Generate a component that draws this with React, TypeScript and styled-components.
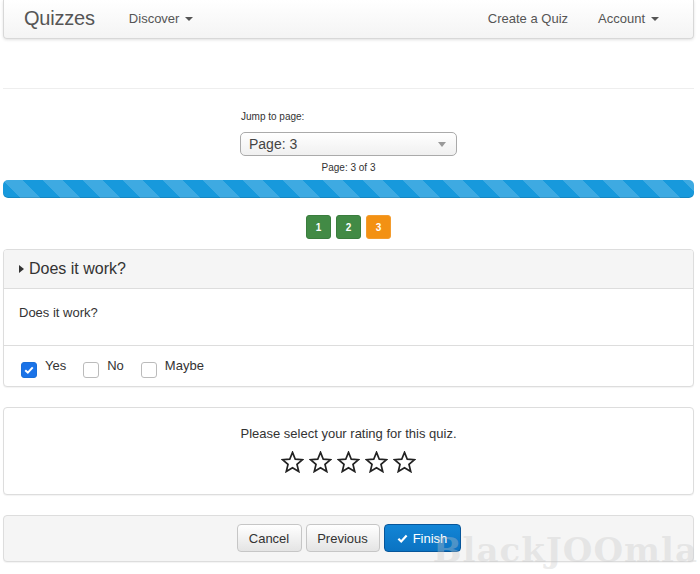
import React from 'react';
import styled, { createGlobalStyle, css } from 'styled-components';

const GlobalStyle = createGlobalStyle`
    html, body {
        margin: 0;
        padding: 0;
        background: #fff;
        font-family: "Liberation Sans", Arial, sans-serif;
        color: #333;
    }
`;

const Page = styled.div`
    position: relative;
    width: 700px;
    height: 574px;
    overflow: hidden;
    padding: 0 6px 0 3px;
    box-sizing: border-box;
`;

const Navbar = styled.nav`
    height: 39px;
    display: flex;
    align-items: center;
    background: linear-gradient(to bottom, #fff 0%, #f4f4f4 100%);
    border: 1px solid #d8d8d8;
    border-top: none;
    border-radius: 0 0 4px 4px;
    box-shadow: 0 1px 3px rgba(0, 0, 0, 0.12);
    box-sizing: border-box;
    padding: 0 0 2px 20px;
`;

const Brand = styled.span`
    font-size: 20px;
    color: #555;
    margin-right: 34px;
    letter-spacing: -0.2px;
`;

const NavLink = styled.span<{ $gap?: number }>`
    font-size: 13px;
    color: #555;
    display: flex;
    align-items: center;
    margin-right: ${(p) => p.$gap ?? 0}px;
`;

const Caret = styled.span`
    display: inline-block;
    margin-left: 6px;
    border-top: 4px solid #555;
    border-left: 4px solid transparent;
    border-right: 4px solid transparent;
    margin-top: 2px;
`;

const Spacer = styled.div`
    flex: 1;
`;

const Rule = styled.hr`
    margin: 49px 0 0;
    border: none;
    border-top: 1px solid #eee;
`;

const Jump = styled.div`
    width: 217px;
    margin: 22px auto 0;
    display: flex;
    flex-direction: column;
`;

const JumpLabel = styled.label`
    font-size: 10px;
    color: #333;
    margin-bottom: 10px;
    margin-left: 1px;
`;

const Select = styled.div`
    height: 24px;
    border: 1px solid #aaa;
    border-radius: 5px;
    background: linear-gradient(to bottom, #fff 0%, #f0f0f0 100%);
    display: flex;
    align-items: center;
    justify-content: space-between;
    padding: 0 10px 0 8px;
    box-sizing: border-box;
    font-size: 14px;
    color: #444;
`;

const SelectArrow = styled.span`
    border-top: 5px solid #999;
    border-left: 4px solid transparent;
    border-right: 4px solid transparent;
`;

const PageOf = styled.div`
    text-align: center;
    font-size: 10px;
    color: #333;
    margin-top: 6px;
`;

const Progress = styled.div`
    margin-top: 7px;
    height: 18px;
    border-radius: 5px;
    background-color: #1799dc;
    background-image: linear-gradient(
        45deg,
        rgba(255, 255, 255, 0.17) 25%,
        transparent 25%,
        transparent 50%,
        rgba(255, 255, 255, 0.17) 50%,
        rgba(255, 255, 255, 0.17) 75%,
        transparent 75%,
        transparent
    );
    background-size: 40px 40px;
    box-shadow: inset 0 -1px 0 rgba(0, 0, 0, 0.12);
`;

const Pager = styled.div`
    display: flex;
    justify-content: center;
    gap: 5px;
    margin: 17px 0 10px;
`;

const PageBtn = styled.span<{ $current?: boolean }>`
    width: 25px;
    height: 24px;
    border-radius: 3px;
    display: flex;
    align-items: center;
    justify-content: center;
    font-size: 10px;
    font-weight: bold;
    color: #fff;
    background: ${(p) => (p.$current ? '#f39113' : '#428a45')};
    border: 1px solid ${(p) => (p.$current ? '#f39c2e' : '#3a7d3d')};
    box-sizing: border-box;
`;

const Panel = styled.section<{ $muted?: boolean }>`
    border: 1px solid #ddd;
    border-radius: 4px;
    box-shadow: 0 1px 1px rgba(0, 0, 0, 0.05);
    background: ${(p) => (p.$muted ? '#f5f5f5' : '#fff')};
    margin-bottom: 20px;
    overflow: hidden;
`;

const PanelHeading = styled.div`
    height: 38px;
    background: #f5f5f5;
    border-bottom: 1px solid #ddd;
    display: flex;
    align-items: center;
    padding-left: 15px;
    font-size: 16px;
    color: #333;
`;

const Triangle = styled.span`
    border-left: 5px solid #333;
    border-top: 4px solid transparent;
    border-bottom: 4px solid transparent;
    margin-right: 5px;
`;

const PanelBody = styled.div`
    height: 57px;
    border-bottom: 1px solid #ddd;
    padding: 16px 15px 0;
    box-sizing: border-box;
    font-size: 13px;
    color: #333;
`;

const Answers = styled.div`
    height: 40px;
    display: flex;
    align-items: center;
    padding: 4px 0 0 17px;
    box-sizing: border-box;
`;

const Answer = styled.label`
    display: flex;
    align-items: flex-start;
    margin-right: 17px;
    font-size: 13px;
    color: #333;
`;

const Box = styled.span<{ $checked?: boolean }>`
    width: 16px;
    height: 16px;
    border-radius: 3px;
    box-sizing: border-box;
    margin: 4px 8px 0 0;
    display: flex;
    align-items: center;
    justify-content: center;
    ${(p) =>
        p.$checked
            ? css`
                  background: #1a73e8;
                  border: 1px solid #1a6fd8;
              `
            : css`
                  background: #fff;
                  border: 1px solid #bbb;
              `}
`;

const RatingBody = styled.div`
    height: 86px;
    display: flex;
    flex-direction: column;
    align-items: center;
    padding-top: 18px;
    box-sizing: border-box;
    font-size: 13px;
    color: #333;
`;

const Stars = styled.div`
    display: flex;
    gap: 5px;
    margin-top: 10px;
`;

const Actions = styled.div`
    height: 45px;
    display: flex;
    justify-content: center;
    align-items: center;
    gap: 4px;
    padding-bottom: 1px;
    box-sizing: border-box;
`;

const Button = styled.button<{ $primary?: boolean; $w: number }>`
    width: ${(p) => p.$w}px;
    height: 28px;
    border-radius: 4px;
    font-family: "Liberation Sans", Arial, sans-serif;
    font-size: 13px;
    display: flex;
    align-items: center;
    justify-content: center;
    gap: 5px;
    padding: 0;
    ${(p) =>
        p.$primary
            ? css`
                  color: #fff;
                  background: linear-gradient(to bottom, #1285d6 0%, #0b73c2 100%);
                  border: 1px solid #07569a;
              `
            : css`
                  color: #333;
                  background: linear-gradient(to bottom, #fff 0%, #e4e4e4 100%);
                  border: 1px solid #c6c6c6;
              `}
`;

const Watermark = styled.div`
    position: absolute;
    right: 2px;
    bottom: 4px;
    font-family: "DejaVu Serif", "Liberation Serif", serif;
    font-weight: bold;
    font-size: 34px;
    letter-spacing: 1px;
    color: rgba(200, 200, 200, 0.35);
    pointer-events: none;
`;

const Star = () => (
    <svg width="23" height="22" viewBox="0 0 24 23">
        <path
            d="M12 1.5 L14.9 8.6 L22.5 9.1 L16.7 14 L18.5 21.4 L12 17.4 L5.5 21.4 L7.3 14 L1.5 9.1 L9.1 8.6 Z"
            fill="none"
            stroke="#222"
            strokeWidth="1.8"
            strokeLinejoin="miter"
        />
    </svg>
);

const Tick = ({ size = 10 }: { size?: number }) => (
    <svg width={size} height={size} viewBox="0 0 12 12">
        <path d="M1.5 6.2 L4.6 9.2 L10.5 2.8" fill="none" stroke="#fff" strokeWidth="2.4" />
    </svg>
);

const App: React.FC = () => (
    <>
        <GlobalStyle />
        <Page>
            <Navbar>
                <Brand>Quizzes</Brand>
                <NavLink>
                    Discover <Caret />
                </NavLink>
                <Spacer />
                <NavLink $gap={30}>Create a Quiz</NavLink>
                <NavLink $gap={34}>
                    Account <Caret />
                </NavLink>
            </Navbar>

            <Rule />

            <Jump>
                <JumpLabel>Jump to page:</JumpLabel>
                <Select>
                    Page: 3 <SelectArrow />
                </Select>
                <PageOf>Page: 3 of 3</PageOf>
            </Jump>

            <Progress />

            <Pager>
                <PageBtn>1</PageBtn>
                <PageBtn>2</PageBtn>
                <PageBtn $current>3</PageBtn>
            </Pager>

            <Panel>
                <PanelHeading>
                    <Triangle />
                    Does it work?
                </PanelHeading>
                <PanelBody>Does it work?</PanelBody>
                <Answers>
                    <Answer>
                        <Box $checked>
                            <Tick />
                        </Box>
                        Yes
                    </Answer>
                    <Answer>
                        <Box />
                        No
                    </Answer>
                    <Answer>
                        <Box />
                        Maybe
                    </Answer>
                </Answers>
            </Panel>

            <Panel>
                <RatingBody>
                    Please select your rating for this quiz.
                    <Stars>
                        {[0, 1, 2, 3, 4].map((i) => (
                            <Star key={i} />
                        ))}
                    </Stars>
                </RatingBody>
            </Panel>

            <Panel $muted>
                <Actions>
                    <Button $w={65}>Cancel</Button>
                    <Button $w={74}>Previous</Button>
                    <Button $w={77} $primary>
                        <Tick size={11} />
                        Finish
                    </Button>
                </Actions>
            </Panel>

            <Watermark>BlackJOOmla</Watermark>
        </Page>
    </>
);

export default App;
